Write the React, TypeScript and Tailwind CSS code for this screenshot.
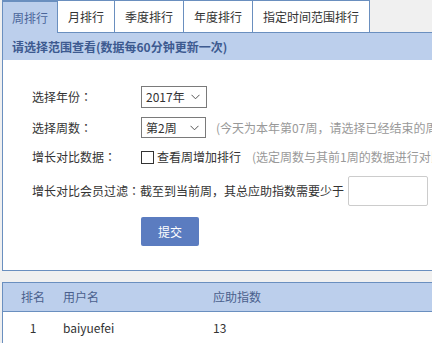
import React from "react";

const Chevron = () => (
  <svg width="9" height="6" viewBox="0 0 9 6" className="block">
    <path d="M0.5 0.8 L4.5 4.8 L8.5 0.8" fill="none" stroke="#555" strokeWidth="1" />
  </svg>
);

const Colon = () => (
  <span style={{ fontFamily: '"Noto Sans CJK TC", sans-serif' }}>：</span>
);

export default function App() {
  const font = { fontFamily: '"Noto Sans CJK SC", "Microsoft YaHei", sans-serif' };
  const tabs = ["月排行", "季度排行", "年度排行", "指定时间范围排行"];
  return (
    <div className="w-[432px] h-[343px] bg-[#f0f0f0] overflow-hidden text-[12px] text-[#333]" style={font}>
      <div className="ml-[2px]">
        {/* tabs */}
        <div className="flex h-[33px]">
          <div className="h-[33px] px-[9px] flex items-center bg-[#bccfec] border-l border-t-2 border-r border-[#6a8fbf] text-[#4a659a]">
            周排行
          </div>
          {tabs.map((t) => (
            <div
              key={t}
              className="h-[33px] px-[10px] flex items-center bg-white border-t border-r border-b border-[#6a8fbf]"
            >
              {t}
            </div>
          ))}
          <div className="flex-1 border-b border-[#6a8fbf]" />
        </div>
        {/* panel */}
        <div className="bg-white border-l border-b border-[#6a8fbf]">
          <div className="h-[27px] bg-[#bccfec] flex items-center pl-[9px] font-bold text-[#3d5a90]">
            请选择范围查看(数据每60分钟更新一次)
          </div>
          <div className="pt-[26px] pl-[29px] pb-[24px] whitespace-nowrap">
            <div className="flex items-center h-[22px]">
              <div className="w-[109px]">选择年份<Colon /></div>
              <div className="w-[66px] h-[22px] border border-[#7a7a7a] flex items-center justify-between pl-[4px] pr-[6px]">
                <span>2017年</span>
                <Chevron />
              </div>
            </div>
            <div className="flex items-center h-[21px] mt-[9px]">
              <div className="w-[109px] shrink-0">选择周数<Colon /></div>
              <div className="w-[65px] shrink-0 h-[21px] border border-[#7a7a7a] flex items-center justify-between pl-[4px] pr-[6px]">
                <span>第2周</span>
                <Chevron />
              </div>
              <span className="ml-[10px] text-[#999]">(今天为本年第07周，请选择已经结束的周进行查看)</span>
            </div>
            <div className="flex items-center h-[20px] mt-[9px]">
              <div className="w-[109px] shrink-0">增长对比数据<Colon /></div>
              <div className="w-[13px] h-[13px] border border-[#333] bg-white shrink-0" />
              <span className="ml-[3px]">查看周增加排行</span>
              <span className="ml-[11px] text-[#999]">(选定周数与其前1周的数据进行对比)</span>
            </div>
            <div className="flex items-center h-[30px] mt-[9px]">
              <span>增长对比会员过滤<Colon />截至到当前周，其总应助指数需要少于</span>
              <div className="ml-[4px] w-[80px] h-[30px] border border-[#ccc] rounded-[2px] bg-white shrink-0" />
            </div>
            <div className="mt-[11px] ml-[109px]">
              <div className="w-[58px] h-[29px] bg-[#5b7cc0] rounded-[2px] text-white flex items-center justify-center">
                提交
              </div>
            </div>
          </div>
        </div>
        {/* table */}
        <div className="mt-[11px] bg-white border-l border-[#6a8fbf]">
          <div className="flex h-[30px] items-center bg-[#bccfec] border-t border-b border-[#6a8fbf] text-[#4a5f8c]">
            <div className="w-[60px] text-center">排名</div>
            <div className="w-[150px]">用户名</div>
            <div>应助指数</div>
          </div>
          <div className="flex h-[31px] items-center">
            <div className="w-[60px] text-center">1</div>
            <div className="w-[150px]">baiyuefei</div>
            <div>13</div>
          </div>
        </div>
      </div>
    </div>
  );
}
